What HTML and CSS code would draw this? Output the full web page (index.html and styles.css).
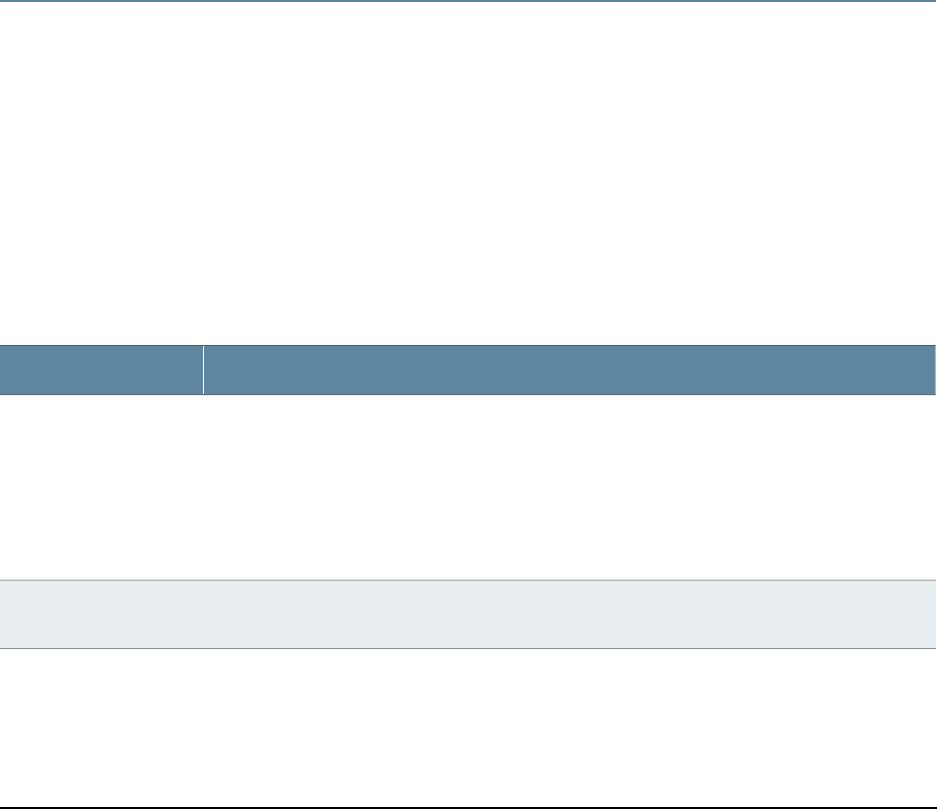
FILE: index.html
```html
<!DOCTYPE html>
<html lang="en">
<head>
<meta charset="utf-8">
<title>Table</title>
<link rel="stylesheet" href="styles.css">
</head>
<body>
<div class="page">
  <div class="topline"></div>
  <div class="intro"></div>
  <div class="table">
    <div class="thead">
      <div class="th th-first"></div>
      <div class="th th-second"></div>
    </div>
    <div class="row row-blank"></div>
    <div class="row row-shaded"></div>
    <div class="row row-last"></div>
  </div>
  <div class="footer-rule"></div>
</div>
</body>
</html>
```
FILE: styles.css
```css
html, body {
  margin: 0;
  padding: 0;
  background: #ffffff;
  font-family: "Liberation Sans", Arial, sans-serif;
}

.page {
  width: 937px;
  height: 809px;
  display: flex;
  flex-direction: column;
  overflow: hidden;
}

.topline {
  width: 936px;
  height: 2px;
  background: #5a87a0;
  flex: none;
}

.intro {
  height: 343px;
  flex: none;
}

.table {
  width: 936px;
  display: flex;
  flex-direction: column;
  flex: none;
}

.thead {
  display: grid;
  grid-template-columns: 203px 1fr;
  column-gap: 1px;
  background: #ffffff;
  border-top: 1px solid #4f5a62;
  border-bottom: 1px solid #56707f;
  border-right: 1px solid #a9bdca;
  height: 48px;
}

.th {
  background: #5d87a1;
}

.row-blank {
  height: 183px;
  border-top: 1px solid #e6eaed;
  border-bottom: 1px solid #dedfe2;
}

.row-shaded {
  height: 67px;
  background: #e9eef2;
  border-top: 1px solid #b6b8bc;
  border-bottom: 1px solid #8f9194;
}

.row-last {
  height: 158px;
}

.footer-rule {
  width: 937px;
  height: 2px;
  background: #000000;
  flex: none;
}
```
